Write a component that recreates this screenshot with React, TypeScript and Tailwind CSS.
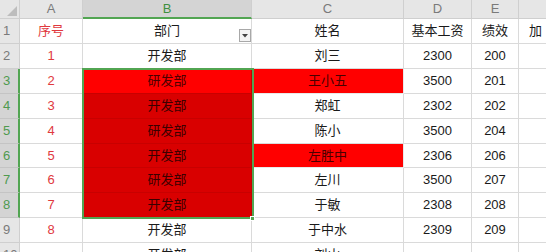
import React from "react";

const cols = [
  { key: "A", w: 63 },
  { key: "B", w: 169 },
  { key: "C", w: 152 },
  { key: "D", w: 68 },
  { key: "E", w: 47 },
  { key: "F", w: 60 },
];

type Row = { n: number; h: number; a: string; b: string; c: string; d: string; e: string; f: string };

const rows: Row[] = [
  { n: 1, h: 25, a: "序号", b: "部门", c: "姓名", d: "基本工资", e: "绩效", f: "加" },
  { n: 2, h: 25, a: "1", b: "开发部", c: "刘三", d: "2300", e: "200", f: "" },
  { n: 3, h: 25, a: "2", b: "研发部", c: "王小五", d: "3500", e: "201", f: "" },
  { n: 4, h: 25, a: "3", b: "开发部", c: "郑虹", d: "2302", e: "202", f: "" },
  { n: 5, h: 25, a: "4", b: "研发部", c: "陈小", d: "3500", e: "204", f: "" },
  { n: 6, h: 24, a: "5", b: "开发部", c: "左胜中", d: "2306", e: "206", f: "" },
  { n: 7, h: 25, a: "6", b: "研发部", c: "左川", d: "3500", e: "207", f: "" },
  { n: 8, h: 25, a: "7", b: "开发部", c: "于敏", d: "2308", e: "208", f: "" },
  { n: 9, h: 25, a: "8", b: "开发部", c: "于中水", d: "2309", e: "209", f: "" },
  { n: 10, h: 25, a: "", b: "开发部", c: "刘山", d: "", e: "", f: "" },
];

const selRows = new Set([3, 4, 5, 6, 7, 8]);

export default function App() {
  return (
    <div
      className="relative w-[546px] h-[252px] overflow-hidden bg-white text-[13px]"
      style={{ fontFamily: '"Liberation Sans", "Noto Sans CJK SC", sans-serif' }}
    >
      {/* column header */}
      <div className="flex h-[19px]">
        <div className="relative w-[20px] shrink-0 bg-[#e6e6e6] border-r border-b border-[#cfcfcf]">
          <svg className="absolute right-[2px] bottom-[2px]" width="10" height="10" viewBox="0 0 10 10">
            <polygon points="10,0 10,10 0,10" fill="#bdbdbd" />
          </svg>
        </div>
        {cols.map((c) => (
          <div
            key={c.key}
            className={
              c.key === "B"
                ? "shrink-0 flex items-center justify-center bg-[#d4d4d4] border-r border-[#cfcfcf] border-b-2 border-b-[#52a552] text-[#3f8f3f]"
                : "shrink-0 flex items-center justify-center bg-[#e6e6e6] border-r border-b border-[#cfcfcf] text-[#7a7a7a]"
            }
            style={{ width: c.w }}
          >
            {c.key === "F" ? "" : c.key}
          </div>
        ))}
      </div>

      {rows.map((r) => {
        const sel = selRows.has(r.n);
        const bBg = r.n === 3 ? "bg-[#ff0000] text-[#4a0000]" : sel ? "bg-[#d90000] text-[#3a0000]" : "bg-white text-[#1a1a1a]";
        const cRed = r.n === 3 || r.n === 6;
        return (
          <div key={r.n} className="flex" style={{ height: r.h }}>
            <div
              className={
                sel
                  ? "w-[20px] shrink-0 flex items-center pl-[3px] bg-[#d4d4d4] border-b border-[#c4c4c4] border-r-2 border-r-[#52a552] text-[#4f9a4f]"
                  : "w-[20px] shrink-0 flex items-center pl-[3px] bg-[#e6e6e6] border-b border-r border-[#cfcfcf] text-[#7a7a7a]"
              }
            >
              {r.n}
            </div>
            <div className="w-[63px] shrink-0 flex items-center justify-center border-r border-b border-[#dadada] text-[#e0393e]">
              {r.a}
            </div>
            <div className={`relative w-[169px] shrink-0 flex items-center justify-center border-r border-b ${sel ? "border-[#c80000]" : "border-[#dadada]"} ${bBg}`}>
              {r.b}
              {r.n === 1 && (
                <div className="absolute left-[156px] top-[10px] w-[12px] h-[13px] border border-[#a8a8a8] bg-[#f4f4f4] flex items-center justify-center">
                  <svg width="6" height="4" viewBox="0 0 6 4">
                    <polygon points="0,0 6,0 3,3.5" fill="#444" />
                  </svg>
                </div>
              )}
            </div>
            <div
              className={`w-[152px] shrink-0 flex items-center justify-center border-r border-b ${
                cRed ? "bg-[#ff0000] text-[#4a0000] border-[#e8e8e8]" : "border-[#dadada] text-[#1a1a1a]"
              }`}
            >
              {r.c}
            </div>
            <div className="w-[68px] shrink-0 flex items-center justify-center border-r border-b border-[#dadada] text-[#1a1a1a]">
              {r.d}
            </div>
            <div className="w-[47px] shrink-0 flex items-center justify-center border-r border-b border-[#dadada] text-[#1a1a1a]">
              {r.e}
            </div>
            <div className="w-[60px] shrink-0 flex items-center pl-[10px] border-b border-[#dadada] text-[#1a1a1a] whitespace-nowrap">
              {r.f}
            </div>
          </div>
        );
      })}

      {/* selection overlay */}
      <div className="absolute left-[82px] top-[68px] w-[172px] h-[151px] border-2 border-[#52a552] pointer-events-none" />
      <div className="absolute left-[250px] top-[216px] w-[5px] h-[5px] bg-[#52a552] border border-white" />
    </div>
  );
}
